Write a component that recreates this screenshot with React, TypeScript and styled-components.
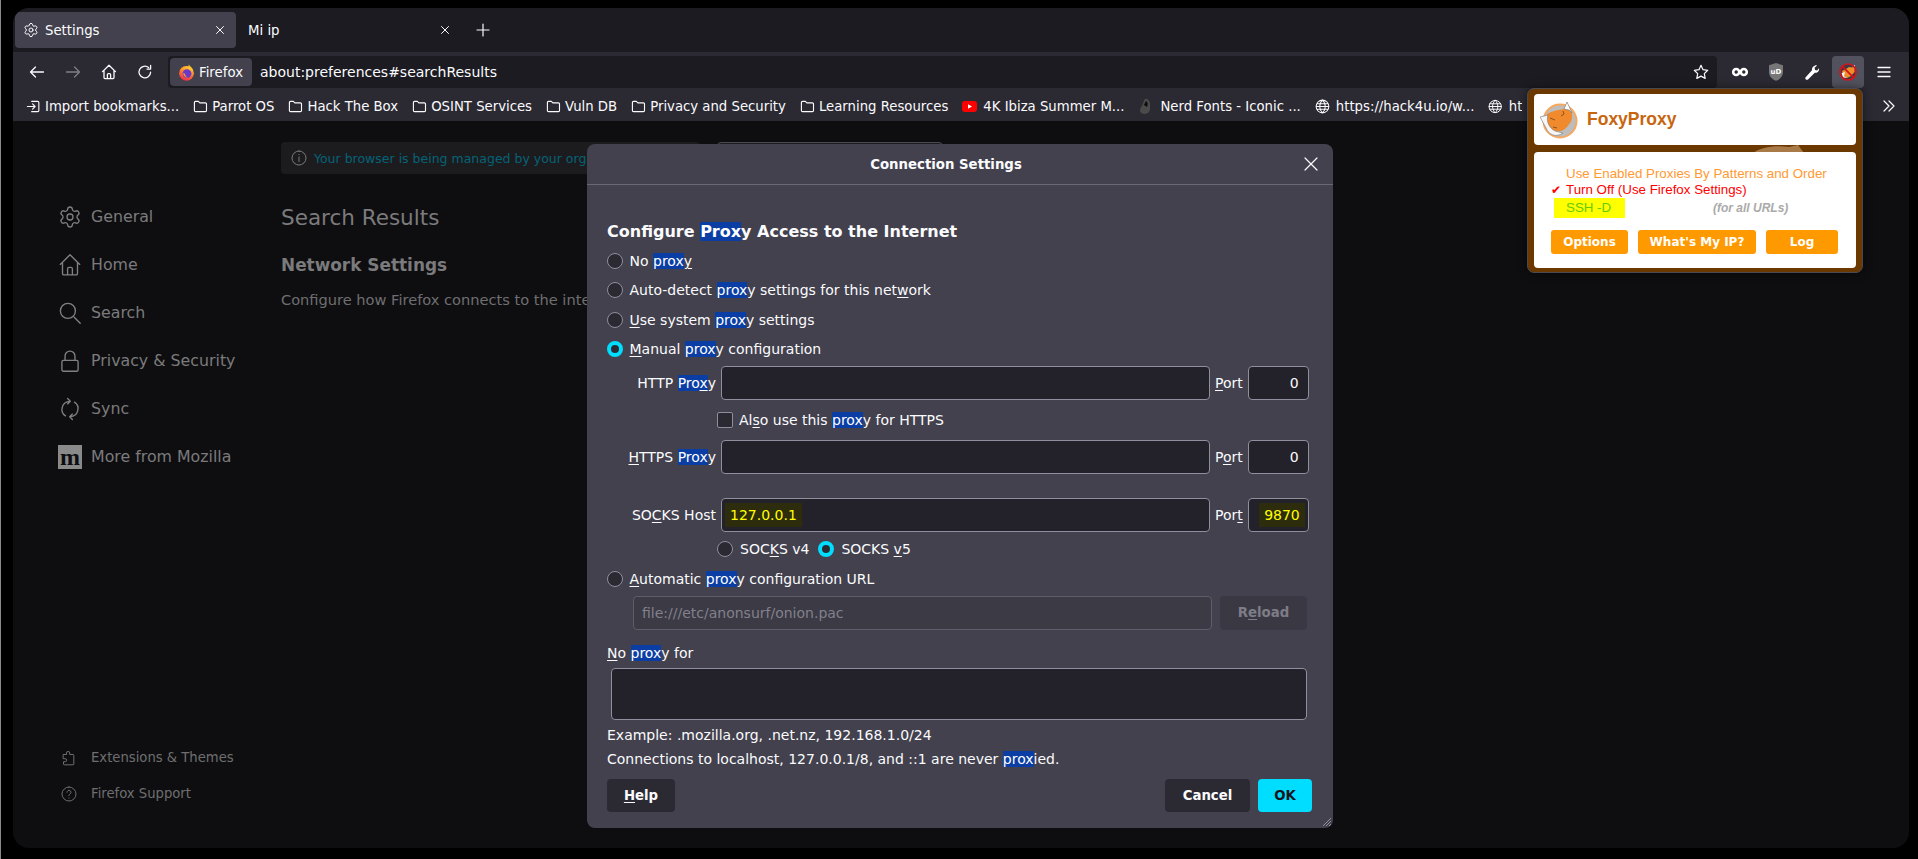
import React from "react";
import styled, { createGlobalStyle } from "styled-components";
import { Settings } from "lucide-react";

const Global = createGlobalStyle`
  html, body { margin: 0; padding: 0; background: #000; height: 100%; overflow: hidden; }
  #root { height: 100%; }
  * { box-sizing: border-box; }
`;

const Screen = styled.div`
  width: 1918px; height: 859px; background: #000; border-left: 1px solid #8a8a8a;
  padding: 8px 9px 11px 12px; font-family: "DejaVu Sans", sans-serif; display: flex;
`;
const BrowserWindow = styled.div`
  position: relative; flex: 1; display: flex; flex-direction: column; border-radius: 16px; overflow: hidden;
  background: #0e0e10;
`;
const TitleBar = styled.div`
  height: 44px; flex: none; background: #1c1b22; display: flex; align-items: center; padding: 0 2px; gap: 4px;
`;
const Tab = styled.div<{ $active?: boolean }>`
  width: 221px; height: 36px; border-radius: 4px; display: flex; align-items: center; gap: 6px; padding: 0 8px;
  background: ${(p) => (p.$active ? "#42414d" : "transparent")}; color: #fbfbfe; font-size: 13.3px;
`;
const TabTitle = styled.span`flex: 1;`;
const NewTab = styled.div`margin-left: 10px; width: 16px; height: 16px; display: flex;`;
const NavBar = styled.div`
  height: 36px; flex: none; background: #2b2a33; padding: 4px 0 0 6px; display: flex; align-items: center;
`;
const NavBtn = styled.div<{ $dim?: boolean }>`
  width: 36px; height: 32px; flex: none; display: flex; align-items: center; justify-content: center;
  opacity: ${(p) => (p.$dim ? 0.4 : 1)}; color: #fbfbfe;
`;
const ActiveNavBtn = styled(NavBtn)`
  width: 32px; margin: 0 2px; background: #52525e; border-radius: 4px;
`;
const UrlBar = styled.div`
  flex: none; width: 1549px; height: 32px; margin: 0 5px; background: #1c1b22; border-radius: 4px; display: flex; align-items: center;
  padding: 0 8px 0 2px; color: #fbfbfe; font-size: 14px;
`;
const Identity = styled.div`
  height: 28px; width: 82px; border-radius: 4px; background: #42414d; display: flex; align-items: center; padding-left: 8px; gap: 4px; font-size: 13.3px;
`;
const UrlText = styled.span`flex: 1; margin-left: 8px;`;
const Bookmarks = styled.div`
  height: 33px; flex: none; background: #2b2a33; display: flex; align-items: center; padding: 3px 12px 0 13px;
`;
const BookmarkList = styled.div`flex: 1; display: flex; align-items: center; gap: 14px; overflow: hidden; white-space: nowrap;`;
const Bookmark = styled.div<{ $gap?: number; $clip?: number }>`
  display: flex; align-items: center; gap: ${(p) => p.$gap ?? 4}px; color: #fbfbfe; font-size: 13.25px; flex: none;
  ${(p) => (p.$clip ? `width: ${p.$clip}px; overflow: hidden;` : "")}
`;
const Content = styled.div`flex: 1; position: relative; display: flex;`;
const Sidebar = styled.nav`
  width: 268px; flex: none; display: flex; flex-direction: column; justify-content: space-between; padding: 71.5px 0 36.5px 45px;
`;
const SideGroup = styled.div`display: flex; flex-direction: column;`;
const SideItem = styled.div`
  height: 48px; display: flex; align-items: center; gap: 9px; color: #7b7b7d; font-size: 15.8px;
`;
const SideIcon = styled.span`width: 24px; height: 24px; flex: none; display: flex; align-items: center; justify-content: center;`;
const MozillaBadge = styled.span`
  width: 24px; height: 24px; background: #8a8a8a; color: #0e0e10; font: bold 24px/20px "Liberation Serif", serif;
  display: flex; align-items: center; justify-content: center;
`;
const SmallItem = styled.div`
  height: 36px; display: flex; align-items: center; gap: 14px; color: #6e6e70; font-size: 13.2px; padding-left: 3px;
`;
const Main = styled.main`flex: 1; padding-top: 21px; color: #7b7b7d;`;
const TopRow = styled.div`display: flex; gap: 17px;`;
const Banner = styled.div`
  width: 419px; height: 32px; border-radius: 4px; background: #1c1c1f; display: flex; align-items: center; padding-left: 10px; gap: 7px;
  color: #056378; font-size: 12.5px; white-space: nowrap; overflow: hidden;
`;
const FindBox = styled.div`width: 226px; height: 32px; border: 1px solid #4a4a55; border-radius: 4px; background: #1c1c1f;`;
const PageTitle = styled.h1`font-size: 21.5px; font-weight: 400; margin: 31px 0 0; line-height: 26px; color: #7b7b7d;`;
const SectionTitle = styled.h2`font-size: 16.9px; font-weight: 700; margin: 24px 0 0; line-height: 20px; color: #7b7b7d;`;
const SectionText = styled.p`font-size: 14.6px; margin: 16px 0 0; line-height: 18px; color: #6e6e70;`;

const Dialog = styled.div`
  position: absolute; left: 574px; top: 23px; width: 746px; height: 684px; background: #42414d; border-radius: 8px;
  color: #fbfbfe; font-size: 14px; display: flex; flex-direction: column;
`;
const DialogHeader = styled.div`
  height: 41px; flex: none; border-bottom: 1px solid #6a6973; display: flex; align-items: center; justify-content: center; padding-right: 28px;
  font-weight: 700; font-size: 13.3px; position: relative;
`;
const CloseBtn = styled.span`position: absolute; right: 14px; top: 12px; width: 16px; height: 16px; display: flex;`;
const DialogBody = styled.div`flex: 1; padding: 0 26px 16px 20px; display: flex; flex-direction: column;`;
const Heading = styled.div`margin-top: 38px; height: 18px; line-height: 18px; font-weight: 700; font-size: 16px; white-space: nowrap;`;
const Hit = styled.span`background: #0a3ea5; color: #fff;`;
const Key = styled.span`text-decoration: underline; text-underline-offset: 2px;`;
const RadioGroup = styled.div`margin-top: 5.5px; display: flex; flex-direction: column;`;
const RadioRow = styled.label<{ $h?: number }>`
  height: ${(p) => p.$h ?? 29.33}px; display: flex; align-items: center; gap: 6.5px; white-space: nowrap;
`;
const Radio = styled.span<{ $on?: boolean }>`
  width: 16px; height: 16px; flex: none; border-radius: 50%;
  ${(p) => p.$on
    ? "background: #2b2a33; border: 4.5px solid #00ddff;"
    : "background: #2b2a33; border: 1px solid #8f8f9d;"}
`;
const ProxyGrid = styled.div<{ $top?: number }>`
  margin-top: ${(p) => p.$top ?? 0}px; display: grid; grid-template-columns: 109px 489px 1fr 61px; column-gap: 5px; align-items: center; height: 34px;
`;
const FieldLabel = styled.span<{ $right?: boolean }>`text-align: ${(p) => (p.$right ? "right" : "left")}; white-space: nowrap;`;
const Field = styled.div<{ $end?: boolean }>`
  height: 34px; background: #23222b; border: 1px solid #8f8f9d; border-radius: 4px; display: flex; align-items: center;
  justify-content: ${(p) => (p.$end ? "flex-end" : "flex-start")}; padding: 0 3px;
`;
const PortValue = styled.span`padding-right: 6px;`;
const Filled = styled.span`
  display: flex; align-items: center; height: 24px; background: #2d2c0c; color: #ffff00; padding: 0 5px;
`;
const SubRow = styled.div<{ $h: number }>`
  height: ${(p) => p.$h}px; padding-left: 110px; display: flex; align-items: center; gap: 6px; white-space: nowrap;
`;
const CheckBox = styled.span`width: 16px; height: 16px; background: #2b2a33; border: 1px solid #8f8f9d; border-radius: 2px; flex: none;`;
const SocksOption = styled.span`display: flex; align-items: center; gap: 7px; margin-right: 3px;`;
const AutoRow = styled.div`margin-top: 3px; margin-left: 26px; display: flex; gap: 8px; height: 34px;`;
const DisabledField = styled.div`
  width: 579px; background: #3b3a45; border: 1px solid #5e5d68; border-radius: 4px; display: flex; align-items: center; padding-left: 8px; color: #82818b;
`;
const ReloadBtn = styled.div`
  flex: 1; background: #3a3943; border-radius: 4px; display: flex; align-items: center; justify-content: center; color: #7e7d87; font-weight: 700; font-size: 13.3px;
`;
const NoProxyLabel = styled.div`margin-top: 14px; height: 18px; line-height: 18px;`;
const TextArea = styled.div`margin: 6px 0 0 4px; height: 52px; background: #23222b; border: 1px solid #8f8f9d; border-radius: 4px;`;
const Note = styled.div<{ $top: number }>`margin-top: ${(p) => p.$top}px; height: 18px; line-height: 18px;`;
const Footer = styled.div`margin: 10.5px -5px 0 0; display: flex; justify-content: space-between;`;
const Btn = styled.div<{ $w: number; $primary?: boolean }>`
  width: ${(p) => p.$w}px; height: 33px; border-radius: 4px; display: flex; align-items: center; justify-content: center;
  background: ${(p) => (p.$primary ? "#00ddff" : "#2b2a33")}; color: ${(p) => (p.$primary ? "#15141a" : "#fbfbfe")};
  font-weight: 700; font-size: 13.3px;
`;
const FooterRight = styled.div`display: flex; gap: 8px;`;
const Grip = styled.svg`position: absolute; right: 1px; bottom: 1px;`;

const Popup = styled.div`
  position: absolute; left: 1514px; top: -33px; width: 336px; height: 185px; background: #6b3800; border: 1px solid #4a4a52; border-radius: 7px;
  padding: 5px 6px 4px; display: flex; flex-direction: column; gap: 7px; font-family: "Liberation Sans", sans-serif; box-shadow: 0 0 8px rgba(0,0,0,.5);
`;
const PopupHeader = styled.div`
  height: 51px; background: #fff; border-radius: 4px; display: flex; align-items: center; padding-left: 6px; gap: 9px;
  color: #c8650f; font-weight: 700; font-size: 17.5px; flex: none;
`;
const PopupBody = styled.div`
  flex: 1; background: #fff; border-radius: 4px; position: relative; padding-top: 14px; font-size: 13.33px; overflow: hidden;
`;
const Watermark = styled.svg`position: absolute; left: 225px; top: 56px;`;
const ModeRow = styled.div<{ $color: string }>`
  position: relative; height: 16px; line-height: 16px; padding-left: 32px; color: ${(p) => p.$color}; white-space: nowrap;
`;
const Tick = styled.span`position: absolute; left: 17px; top: 0; font-size: 12px;`;
const ProxyRow = styled.div`position: relative; height: 20px; display: flex; align-items: center; margin: 0 0 0 20px;`;
const ProxyName = styled.span`
  width: 71px; height: 20px; background: #ffff00; color: #66cc00; padding-left: 12px; line-height: 20px; flex: none;
`;
const ProxyScope = styled.span`margin-left: 88px; color: #aaaaaa; font-style: italic; font-weight: 700; font-size: 12px;`;
const PopupButtons = styled.div`position: relative; display: flex; gap: 10px; margin: 12px 0 0 17px;`;
const PopupBtn = styled.div<{ $w: number }>`
  width: ${(p) => p.$w}px; height: 24px; background: #ff9900; border-radius: 3px; color: #fff; font: 700 12px "DejaVu Sans", sans-serif;
  display: flex; align-items: center; justify-content: center;
`;
const ShieldLabel = styled.text`font: 700 7px "DejaVu Sans", sans-serif; fill: #fff;`;

const Stroke: React.FC<{ s?: number; c?: string; w?: number; d: string; children?: React.ReactNode }> = ({ s = 16, c = "#fbfbfe", w = 1.3, d, children }) => (
  <svg width={s} height={s} viewBox="0 0 16 16" fill="none" stroke={c} strokeWidth={w} strokeLinecap="round" strokeLinejoin="round">
    <path d={d} />
    {children}
  </svg>
);

const HOME = "M1.5 7.6 8 1.2l6.5 6.4M3 6.2v7.4a1 1 0 0 0 1 1h8a1 1 0 0 0 1-1V6.2M6.4 14.6v-4a1 1 0 0 1 1-1h1.2a1 1 0 0 1 1 1v4";
const Folder = () => (
  <Stroke s={15} w={1.2} d="M1.5 3.7a1.2 1.2 0 0 1 1.2-1.2h3l1.6 1.6h5.9a1.2 1.2 0 0 1 1.2 1.2v6.9a1.2 1.2 0 0 1-1.2 1.2H2.7a1.2 1.2 0 0 1-1.2-1.2z" />
);
const Globe = () => (
  <Stroke s={15} w={1.1} d="M8 1.2a6.8 6.8 0 1 0 0 13.6A6.8 6.8 0 0 0 8 1.2zM1.2 8h13.6M2 5h12M2 11h12M8 1.2c-4 3.6-4 10 0 13.6M8 1.2c4 3.6 4 10 0 13.6" />
);
const ImportIcon = () => (
  <Stroke s={15} w={1.2} d="M6 2.5h6.5a1.2 1.2 0 0 1 1.2 1.2v8.6a1.2 1.2 0 0 1-1.2 1.2H6M1.5 8h8M7 5.3 9.7 8 7 10.7" />
);
const FirefoxLogo = () => (
  <svg width="17" height="17" viewBox="0 0 17 17">
    <defs>
      <linearGradient id="ffo" x1="0.7" y1="0" x2="0.3" y2="1"><stop offset="0" stopColor="#ffd43a" /><stop offset="0.5" stopColor="#ff7a2a" /><stop offset="1" stopColor="#f0264f" /></linearGradient>
    </defs>
    <circle cx="8.5" cy="9.3" r="7.4" fill="url(#ffo)" />
    <path d="M10.5.6c1.5 1.6 3.7 3.2 4.5 5.5L11 7z" fill="#ffc52e" />
    <circle cx="9" cy="9.6" r="4.4" fill="#6a39c9" />
    <path d="M5 9c.3 3 2.6 5 5.3 4.5-2-.4-3.2-1.9-3.3-3.7z" fill="#ff9a2e" />
  </svg>
);
const FoxHead: React.FC<{ s: number }> = ({ s }) => (
  <svg width={s} height={s} viewBox="0 0 38 38">
    <circle cx="20" cy="20" r="16.5" fill="#bdbdbd" stroke="#f6a85e" strokeWidth="2" />
    <path d="M7 13C12 10 18 9 24 8L27 1 31 10C33 14 32 20 30 22 26 28 22 31 17 30 12 30 8 25 7 21z" fill="#f08a2c" />
    <path d="M24 8 27 1 32 12 29 9z" fill="#fff" stroke="#777" strokeWidth=".6" />
    <path d="M0 16 8 14C6 20 9 27 15 30L23 32C16 37 9 34 6 27z" fill="#f6f6f6" stroke="#777" strokeWidth=".6" />
    <path d="M10 17 15 19M21 15l3-2M23 10l1 3M13 26l4 1" stroke="#8a5520" strokeWidth="1" fill="none" />
  </svg>
);
const FoxBlocked = () => (
  <svg width="18" height="18" viewBox="0 0 18 18">
    <circle cx="9" cy="9" r="8" fill="#3c3b44" />
    <path d="M3 8 7 6l3-2 3 .5L16 3l-.5 6L12 13l-4 2-3-2z" fill="#ef8f2a" />
    <path d="M2.5 10 6 9l-1 4 3 2-4-.5zM14 3l2-1-.4 4z" fill="#f4f4f4" />
    <circle cx="9" cy="9" r="8" fill="none" stroke="#d6121d" strokeWidth="1.7" />
    <path d="M3.4 3.4 14.6 14.6" stroke="#d6121d" strokeWidth="1.7" />
  </svg>
);

const Hamburger = () => <Stroke d="M2 3.5h12M2 8h12M2 12.5h12" w={1.3} />;

const App: React.FC = () => (
  <>
    <Global />
    <Screen>
      <BrowserWindow>
        <TitleBar>
          <Tab $active>
            <Settings size={16} strokeWidth={1.5} color="#fbfbfe" />
            <TabTitle>Settings</TabTitle>
            <Stroke s={16} w={1} d="M4.5 4.5l7 7M11.5 4.5l-7 7" />
          </Tab>
          <Tab>
            <TabTitle>Mi ip</TabTitle>
            <Stroke s={16} w={1} d="M4.5 4.5l7 7M11.5 4.5l-7 7" />
          </Tab>
          <NewTab><Stroke s={16} w={1.2} d="M8 2v12M2 8h12" /></NewTab>
        </TitleBar>
        <NavBar>
          <NavBtn><Stroke d="M14.5 8h-13M6.5 3l-5 5 5 5" /></NavBtn>
          <NavBtn $dim><Stroke d="M1.5 8h13M9.5 3l5 5-5 5" /></NavBtn>
          <NavBtn><Stroke d={HOME} /></NavBtn>
          <NavBtn><Stroke d="M13.6 8.2A5.8 5.8 0 1 1 11.6 3.6M13.6 1.5v3.6H10" /></NavBtn>
          <UrlBar>
            <Identity><FirefoxLogo />Firefox</Identity>
            <UrlText>about:preferences#searchResults</UrlText>
            <Stroke d="M8 1.3l2 4.4 4.7.6-3.4 3.3.9 4.8L8 12.1l-4.2 2.3.9-4.8L1.3 6.3 6 5.7z" w={1.2} />
          </UrlBar>
          <NavBtn>
            <svg width="18" height="18" viewBox="0 0 18 18" fill="none" stroke="#fff" strokeWidth="2.6">
              <circle cx="5.2" cy="9" r="3" /><circle cx="12.8" cy="9" r="3" />
            </svg>
          </NavBtn>
          <NavBtn>
            <svg width="16" height="18" viewBox="0 0 16 18">
              <path d="M8 0 15 2.2V9c0 4.2-3.2 7.4-7 8.8C4.2 16.4 1 13.2 1 9V2.2z" fill="#777" />
              <ShieldLabel x="8" y="11" textAnchor="middle">uD</ShieldLabel>
            </svg>
          </NavBtn>
          <NavBtn>
            <svg width="16" height="16" viewBox="0 0 16 16" fill="#fff">
              <path d="M15 4.2c.6 2.5-1.4 5-4.2 4.6L4 15.4c-.6.6-1.6.6-2.2 0l-.1-.1c-.6-.6-.6-1.5 0-2.1L8 6.2C7.6 3.6 10.2 1 13 1.4L10.6 3.8l.5 2.1 2 .5z" />
            </svg>
          </NavBtn>
          <ActiveNavBtn><FoxBlocked /></ActiveNavBtn>
          <NavBtn><Hamburger /></NavBtn>
        </NavBar>
        <Bookmarks>
          <BookmarkList>
            <Bookmark><ImportIcon />Import bookmarks...</Bookmark>
            <Bookmark><Folder />Parrot OS</Bookmark>
            <Bookmark><Folder />Hack The Box</Bookmark>
            <Bookmark><Folder />OSINT Services</Bookmark>
            <Bookmark><Folder />Vuln DB</Bookmark>
            <Bookmark><Folder />Privacy and Security</Bookmark>
            <Bookmark><Folder />Learning Resources</Bookmark>
            <Bookmark $gap={6}>
              <svg width="15" height="15" viewBox="0 0 15 15"><rect y="2" width="15" height="11" rx="3" fill="#f00" /><path d="M6 5.2 10 7.5 6 9.8z" fill="#fff" /></svg>
              4K Ibiza Summer M...
            </Bookmark>
            <Bookmark $gap={7}>
              <svg width="15" height="17" viewBox="0 0 15 17"><path d="M8 .5c3 1 4 3 4 6s1 7-3 9c-3 1-7 0-7-3s2-4 3-7 1-4 3-5z" fill="#4a4a4a" /><path d="M8 3c2 1 2 3 1 6L6 7z" fill="#0c0c0c" /></svg>
              Nerd Fonts - Iconic ...
            </Bookmark>
            <Bookmark $gap={6}><Globe />https://hack4u.io/w...</Bookmark>
            <Bookmark $gap={6} $clip={34}><Globe /><span>ht</span></Bookmark>
          </BookmarkList>
          <Stroke d="M3 3l5 5-5 5M8 3l5 5-5 5" w={1.2} />
        </Bookmarks>
        <Content>
          <Sidebar>
            <SideGroup>
              <SideItem><SideIcon><Settings size={24} strokeWidth={1.3} color="#808082" /></SideIcon>General</SideItem>
              <SideItem><SideIcon><Stroke s={24} c="#808082" w={0.9} d={HOME} /></SideIcon>Home</SideItem>
              <SideItem><SideIcon><Stroke s={24} c="#808082" w={0.9} d="M14.8 14.8l-4-4M11.6 6.6a5 5 0 1 1-10 0 5 5 0 0 1 10 0z" /></SideIcon>Search</SideItem>
              <SideItem><SideIcon><Stroke s={24} c="#808082" w={0.9} d="M4.7 7.6V4.7a3.3 3.3 0 0 1 6.6 0v2.9M3.6 7.6h8.8a1 1 0 0 1 1 1v5.2a1 1 0 0 1-1 1H3.6a1 1 0 0 1-1-1V8.6a1 1 0 0 1 1-1z" /></SideIcon>Privacy &amp; Security</SideItem>
              <SideItem><SideIcon><Stroke s={24} c="#808082" w={0.9} d="M5 12.6A5.3 5.3 0 0 1 7.8 2.9M6.4 1l1.8 1.8-1.8 1.8M11 3.4A5.3 5.3 0 0 1 8.2 13.1M9.6 15l-1.8-1.8 1.8-1.8" /></SideIcon>Sync</SideItem>
              <SideItem><MozillaBadge>m</MozillaBadge>More from Mozilla</SideItem>
            </SideGroup>
            <SideGroup>
              <SmallItem><Stroke s={16} c="#6e6e70" w={1} d="M2.5 4.5h3V3a1.6 1.6 0 0 1 3.2 0v1.5h3.3a.8.8 0 0 1 .8.8V14a.8.8 0 0 1-.8.8H3.3a.8.8 0 0 1-.8-.8v-2.3h1.7a1.5 1.5 0 0 0 0-3H2.5z" />Extensions &amp; Themes</SmallItem>
              <SmallItem><Stroke s={16} c="#6e6e70" w={1} d="M8 1a7 7 0 1 0 0 14A7 7 0 0 0 8 1zM6 6.2a2 2 0 1 1 3 1.8c-.7.4-1 .8-1 1.6M8 11.8v.2" />Firefox Support</SmallItem>
            </SideGroup>
          </Sidebar>
          <Main>
            <TopRow>
              <Banner><Stroke s={16} c="#7b7b7d" w={1} d="M8 1a7 7 0 1 0 0 14A7 7 0 0 0 8 1zM8 7v4.5M8 4.4v.2" />Your browser is being managed by your organization.</Banner>
              <FindBox />
            </TopRow>
            <PageTitle>Search Results</PageTitle>
            <SectionTitle>Network Settings</SectionTitle>
            <SectionText>Configure how Firefox connects to the internet.</SectionText>
          </Main>
          <Dialog>
            <DialogHeader>
              Connection Settings
              <CloseBtn><Stroke s={16} w={1.2} d="M2 2l12 12M14 2 2 14" /></CloseBtn>
            </DialogHeader>
            <DialogBody>
              <Heading>Configure <Hit>Prox</Hit>y Access to the Internet</Heading>
              <RadioGroup>
                <RadioRow><Radio /><span>No <Hit>prox</Hit><Key>y</Key></span></RadioRow>
                <RadioRow><Radio /><span>Auto-detect <Hit>prox</Hit>y settings for this net<Key>w</Key>ork</span></RadioRow>
                <RadioRow><Radio /><span><Key>U</Key>se system <Hit>prox</Hit>y settings</span></RadioRow>
                <RadioRow><Radio $on /><span><Key>M</Key>anual <Hit>prox</Hit>y configuration</span></RadioRow>
              </RadioGroup>
              <ProxyGrid $top={2}>
                <FieldLabel $right>HTTP <Hit>Pro<Key>x</Key></Hit>y</FieldLabel>
                <Field />
                <FieldLabel><Key>P</Key>ort</FieldLabel>
                <Field $end><PortValue>0</PortValue></Field>
              </ProxyGrid>
              <SubRow $h={40}><CheckBox /><span>Al<Key>s</Key>o use this <Hit>prox</Hit>y for HTTPS</span></SubRow>
              <ProxyGrid>
                <FieldLabel $right><Key>H</Key>TTPS <Hit>Prox</Hit>y</FieldLabel>
                <Field />
                <FieldLabel>P<Key>o</Key>rt</FieldLabel>
                <Field $end><PortValue>0</PortValue></Field>
              </ProxyGrid>
              <ProxyGrid $top={24}>
                <FieldLabel $right>SO<Key>C</Key>KS Host</FieldLabel>
                <Field><Filled>127.0.0.1</Filled></Field>
                <FieldLabel>Por<Key>t</Key></FieldLabel>
                <Field $end><Filled>9870</Filled></Field>
              </ProxyGrid>
              <SubRow $h={34}>
                <SocksOption><Radio /><span>SOC<Key>K</Key>S v4</span></SocksOption>
                <SocksOption><Radio $on /><span>SOCKS <Key>v</Key>5</span></SocksOption>
              </SubRow>
              <RadioRow $h={27}><Radio /><span><Key>A</Key>utomatic <Hit>prox</Hit>y configuration URL</span></RadioRow>
              <AutoRow>
                <DisabledField>file:///etc/anonsurf/onion.pac</DisabledField>
                <ReloadBtn><span>R<Key>e</Key>load</span></ReloadBtn>
              </AutoRow>
              <NoProxyLabel><Key>N</Key>o <Hit>prox</Hit>y for</NoProxyLabel>
              <TextArea />
              <Note $top={6}>Example: .mozilla.org, .net.nz, 192.168.1.0/24</Note>
              <Note $top={6.5}>Connections to localhost, 127.0.0.1/8, and ::1 are never <Hit>prox</Hit>ied.</Note>
              <Footer>
                <Btn $w={68}><span><Key>H</Key>elp</span></Btn>
                <FooterRight>
                  <Btn $w={85}>Cancel</Btn>
                  <Btn $w={54} $primary>OK</Btn>
                </FooterRight>
              </Footer>
            </DialogBody>
            <Grip width="10" height="10" viewBox="0 0 10 10" stroke="#8f8f9d" strokeWidth="1">
              <path d="M1 9 9 1M4 9l5-5M7 9l2-2" />
            </Grip>
          </Dialog>
          <Popup>
            <PopupHeader><FoxHead s={38} />FoxyProxy</PopupHeader>
            <Watermark width="56" height="8" viewBox="0 0 56 8">
              <path d="M0 8C8 2 22 0 36 2L45 0l6 8z" fill="#a87a48" />
            </Watermark>
            <PopupBody>
              <ModeRow $color="#ff9933">Use Enabled Proxies By Patterns and Order</ModeRow>
              <ModeRow $color="#ff0000"><Tick>✔</Tick>Turn Off (Use Firefox Settings)</ModeRow>
              <ProxyRow><ProxyName>SSH -D</ProxyName><ProxyScope>(for all URLs)</ProxyScope></ProxyRow>
              <PopupButtons>
                <PopupBtn $w={77}>Options</PopupBtn>
                <PopupBtn $w={118}>What's My IP?</PopupBtn>
                <PopupBtn $w={72}>Log</PopupBtn>
              </PopupButtons>
            </PopupBody>
          </Popup>
        </Content>
      </BrowserWindow>
    </Screen>
  </>
);

export default App;
